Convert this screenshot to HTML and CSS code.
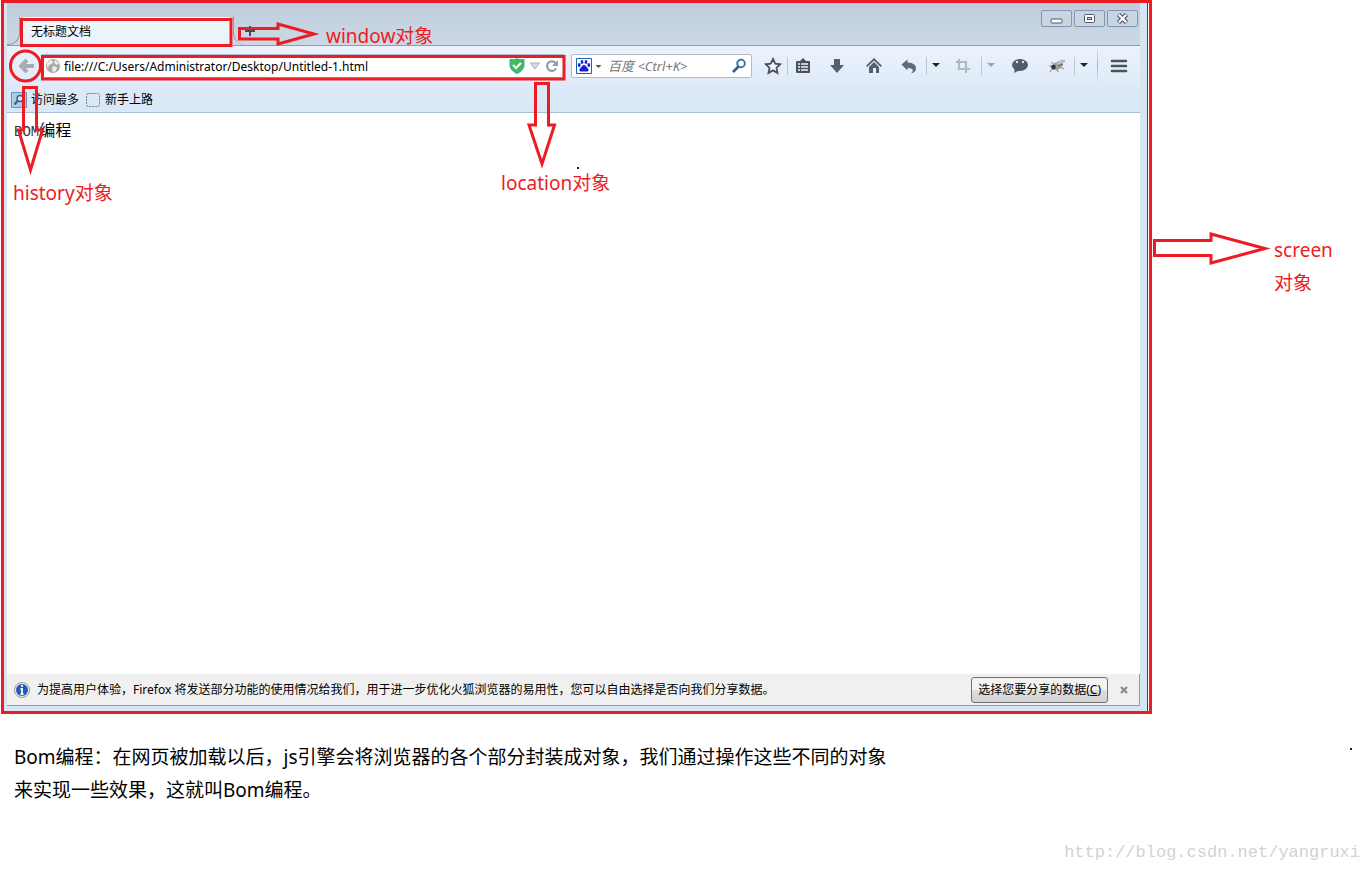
FILE: index.html
```html
<!DOCTYPE html>
<html lang="zh-CN">
<head>
<meta charset="utf-8">
<title>Bom编程</title>
<link rel="stylesheet" href="styles.css">
</head>
<body>
<main class="stage">
  <section class="window">
    <div class="window-inner">
      <header class="tabbar">
        <div class="tab-edge"></div>
        <div class="tab">无标题文档</div>
        <button class="new-tab" aria-label="新建标签页"><svg width="12" height="12" viewBox="0 0 12 12"><path d="M6 1v10M1 6h10" stroke="#3f4b5b" stroke-width="2"/></svg></button>
        <div class="window-buttons">
          <button aria-label="最小化"><svg width="13" height="11" viewBox="0 0 13 11"><rect x="1" y="6" width="11" height="4" rx="1" fill="#fff" stroke="#535666"/></svg></button>
          <button aria-label="还原"><svg width="13" height="11" viewBox="0 0 13 11"><rect x="1.500" y="1.500" width="10" height="8" rx="1" fill="#fff" stroke="#535666"/><rect x="4.500" y="4.500" width="4" height="2" fill="#c5d3e1" stroke="#535666"/></svg></button>
          <button aria-label="关闭"><svg width="13" height="11" viewBox="0 0 13 11"><path d="M2.500 1.500 10.500 9.500M10.500 1.500 2.500 9.500" stroke="#535666" stroke-width="4.500"/><path d="M2.800 1.800 10.200 9.200M10.200 1.800 2.800 9.200" stroke="#fff" stroke-width="2.300"/></svg></button>
        </div>
      </header>
      <nav class="toolbar">
        <button class="back" aria-label="后退"><svg width="16" height="16" viewBox="0 0 16 16"><path d="M8 2 2 8l6 6M3 8h12" fill="none" stroke="#a6adb8" stroke-width="4"/></svg></button>
        <div class="address">
          <svg width="16" height="16" viewBox="0 0 16 16"><circle cx="8" cy="8" r="7" fill="#a9a9a9"/><path d="M2 5 5 2l3 1-1 3-3 1-1 3-1-2zM10 2l4 3-2 2-3-2zM8 8l4 1-1 4-3 1-1-3z" fill="#eee"/></svg>
          <input type="text" aria-label="网址" value="file:///C:/Users/Administrator/Desktop/Untitled-1.html">
          <svg width="16" height="16" viewBox="0 0 16 16"><path d="M1 1.500Q5 2 8 .8 11 2 15 1.500V8q-1 5-7 7.500Q2 13 1 8z" fill="#43b95e" stroke="#2bacc0"/><path d="m4 7 3 3 5-5" stroke="#fff" stroke-width="2" fill="none"/></svg>
          <svg width="12" height="16" viewBox="0 0 12 16"><path d="M1.500 5h9L6 11z" fill="#d6dae0" stroke="#a9b0ba"/></svg>
          <button class="reload" aria-label="重新载入"><svg width="14" height="14" viewBox="0 0 14 14"><path d="M11 9.500A4.800 4.800 0 1 1 10.500 4" fill="none" stroke="#929ba7" stroke-width="2.200"/><path d="M13 1v6H7z" fill="#929ba7"/></svg></button>
        </div>
        <div class="search">
          <svg width="16" height="16" viewBox="0 0 16 16"><path d="M.5.500h15v15H.5z" fill="#fff" stroke="#1268a8"/><g fill="#1b20d8"><ellipse cx="3.200" cy="7" rx="1.400" ry="2"/><ellipse cx="6" cy="4" rx="1.400" ry="2"/><ellipse cx="10" cy="4" rx="1.400" ry="2"/><ellipse cx="12.800" cy="7" rx="1.400" ry="2"/><path d="M8 7C6 7 6 9 4.500 10S3 13.500 5 13.500h6c2 0 2-2.500.5-3.500S10 7 8 7z"/></g></svg>
          <svg width="7" height="16" viewBox="0 0 7 16"><path d="M.5 7h6L3.500 10z" fill="#555"/></svg>
          <input type="search" aria-label="百度搜索" placeholder="百度 &lt;Ctrl+K&gt;">
          <button class="go" aria-label="搜索"><svg width="16" height="16" viewBox="0 0 16 16"><circle cx="10" cy="5.500" r="3.800" fill="none" stroke="#2e6da4" stroke-width="1.800"/><path d="m7.500 8.500-5.500 5.500" stroke="#2a5f92" stroke-width="2.600"/></svg></button>
        </div>
        <div class="tools">
          <button class="tool-star" aria-label="收藏"><svg width="18" height="18" viewBox="0 0 18 18"><path d="m9 2 2.200 4.700 5 .6-3.700 3.500 1 5.100L9 13.400l-4.500 2.500 1-5.100L1.800 7.300l5-.6z" fill="#f4f7fb" stroke="#49525d" stroke-width="1.800"/></svg></button>
          <i class="sep"></i>
          <button class="tool-list" aria-label="书签"><svg width="16" height="16" viewBox="0 0 16 16"><path d="M2 3h3l3-3 3 3h3q1 0 1 1v10q0 1-1 1H2q-1 0-1-1V4q0-1 1-1z" fill="#49525d"/><path d="M3 6h2M6 6h7M3 9h2M6 9h7M3 12h2M6 12h7" stroke="#eef3fa" stroke-width="1.500"/></svg></button>
          <button class="tool" aria-label="下载"><svg width="16" height="16" viewBox="0 0 16 16"><path d="M5 1h6v6h4l-7 8-7-8h4z" fill="#56606c"/></svg></button>
          <button class="tool" aria-label="主页"><svg width="16" height="16" viewBox="0 0 16 16"><path d="m.7 8.300 7.300-7 7.300 7" fill="none" stroke="#56606c" stroke-width="1.800"/><path d="m8 4 5 5v6h-3v-5H7v5H3V9z" fill="#56606c"/></svg></button>
          <button class="tool tool-split" aria-label="撤销"><svg width="16" height="16" viewBox="0 0 16 16"><path d="m.5 6.500 6-5v3c6 0 9 3 8.500 6.500Q14.500 14 10 15.500q3-3 1-4.500-1-1-4.500-1v2.500z" fill="#606b77"/></svg></button>
          <i class="sep"></i>
          <button class="caret" aria-label="更多撤销选项"><svg width="8" height="5" viewBox="0 0 8 5"><path d="M0 0h8L4 4z" fill="#1f2429"/></svg></button>
          <button class="tool" aria-label="截图"><svg width="16" height="16" viewBox="0 0 16 16"><path d="M4 1v10h11M1 4h10v11" fill="none" stroke="#b1b9c3" stroke-width="2.200"/></svg></button>
          <i class="sep"></i>
          <button class="caret" aria-label="截图选项"><svg width="8" height="5" viewBox="0 0 8 5"><path d="M0 0h8L4 4z" fill="#9ba4af"/></svg></button>
          <button class="tool tool-chat" aria-label="聊天"><svg width="18" height="16" viewBox="0 0 18 16"><ellipse cx="9" cy="7" rx="8" ry="6" fill="#515c69"/><path d="m4 10-1 5 6-3z" fill="#515c69"/><circle cx="6" cy="4" r="1.200" fill="#dfe7f0"/><circle cx="12" cy="4" r="1.200" fill="#dfe7f0"/></svg></button>
          <button class="tool tool-split" aria-label="调试"><svg width="18" height="16" viewBox="0 0 18 16"><path d="M1 8h4M5 10l-3 4M9 11l1 3M12 9l4 2M3 4l4 3" stroke="#888" fill="none"/><ellipse cx="9" cy="8" rx="6" ry="3.800" transform="rotate(-25 9 8)" fill="#a2a29f"/><circle cx="5.500" cy="9" r="2.300" fill="#333"/><path d="m7 6 7-4 3 1-6 4z" fill="#c5c5c1" stroke="#888" stroke-width=".5"/><path d="m10 8 5-2" stroke="#555"/></svg></button>
          <i class="sep"></i>
          <button class="caret" aria-label="调试选项"><svg width="8" height="5" viewBox="0 0 8 5"><path d="M0 0h8L4 4z" fill="#1f2429"/></svg></button>
          <i class="sep sep-tall"></i>
          <button class="menu" aria-label="菜单"><svg width="18" height="14" viewBox="0 0 18 14"><path d="M2 2h14M2 7h14M2 12h14" stroke="#49525d" stroke-width="2.600" stroke-linecap="round"/></svg></button>
        </div>
      </nav>
      <div class="bookmarks">
        <a href="#"><svg width="16" height="16" viewBox="0 0 16 16"><path d="M.5.500h15v15H.5z" fill="#a9cde8" stroke="#6795b8"/><circle cx="9" cy="6.500" r="3" fill="#d9ebf8" stroke="#346388" stroke-width="1.500"/><path d="m6.500 9-3 3.500" stroke="#346388" stroke-width="2"/></svg>访问最多</a>
        <a href="#"><svg width="16" height="16" viewBox="0 0 16 16"><rect x="1.500" y="1.500" width="13" height="13" rx="2" fill="none" stroke="#777e87" stroke-dasharray="2 1"/></svg>新手上路</a>
      </div>
      <article class="viewport"><span class="mono">BOM</span>编程</article>
      <footer class="notice">
        <svg width="16" height="16" viewBox="0 0 16 16"><circle cx="8" cy="8" r="7.500" fill="#eee" stroke="#999"/><circle cx="8" cy="8" r="6" fill="#2459b5"/><path d="M8 3v2M6.500 7H8v5M6.500 12h3" stroke="#fff" stroke-width="1.800" fill="none"/></svg>
        <p>为提高用户体验，Firefox 将发送部分功能的使用情况给我们，用于进一步优化火狐浏览器的易用性，您可以自由选择是否向我们分享数据。</p>
        <button class="choose">选择您要分享的数据(<u>C</u>)</button>
        <button class="dismiss" aria-label="关闭通知"><svg width="8" height="8" viewBox="0 0 8 8"><path d="m1 1 6 6M7 1 1 7" stroke="#838b94" stroke-width="2.200"/></svg></button>
      </footer>
    </div>
  </section>
  <aside class="screen-label">screen<br>对象</aside>
</main>
<section class="caption">
  <p>Bom编程：在网页被加载以后，js引擎会将浏览器的各个部分封装成对象，我们通过操作这些不同的对象来实现一些效果，这就叫Bom编程。</p>
</section>
<p class="watermark">http://blog.csdn.net/yangruxi</p>
<svg class="marks" width="1368" height="760" viewBox="0 0 1368 760">
  <g fill="none" stroke="#ed1c24" stroke-width="3">
    <path d="M21.500 19.500h209.500v26H21.500zM42.500 56.500h521.500v22.500H42.500z"/>
    <circle cx="25.500" cy="66" r="15"/>
    <path d="M239.500 28.500H278V24l36 10-36 10v-5h-38.500z"/>
    <path d="M23.500 87.500h13V130h6l-12 40-12-40h5z"/>
    <path d="M535.500 83.500h13V125h6L542 164l-13-39h6.500z"/>
    <path d="M1154.500 240.500h56.500V234l54 14.500-54 14.500v-7.500h-56.500z"/>
  </g>
  <path d="M577 167h2v2h-2zM1350 748h2v2h-2z" fill="#222"/>
</svg>
<span class="label label-window">window对象</span>
<span class="label label-history">history对象</span>
<span class="label label-location">location对象</span>
</body>
</html>
```
FILE: styles.css
```css
* { box-sizing: border-box; }
body {
  margin: 0;
  min-height: 100vh;
  display: flex;
  flex-direction: column;
  position: relative;
  background: #fff;
  color: #000;
  font: 12px/16px "Noto Sans", "Noto Sans CJK SC", sans-serif;
}
p { margin: 0; }
svg { display: block; flex: none; }
button {
  display: flex;
  align-items: center;
  justify-content: center;
  padding: 0;
  border: 0;
  background: none;
  font: inherit;
  color: inherit;
}
input {
  flex: 1;
  min-width: 0;
  padding: 2px 0 0;
  border: 0;
  outline: 0;
  background: none;
  font: inherit;
  color: inherit;
}
.stage { flex: 1; display: flex; }
.window {
  flex: 1;
  display: flex;
  margin-left: 1px;
  padding: 0 1px 0 0;
  border: 3px solid #ed1c24;
  background: #fff;
}
.window-inner {
  flex: 1;
  display: flex;
  flex-direction: column;
  min-width: 0;
  padding: 0 7px 5px 3px;
  border-right: 1px solid #3d4454;
  background: #d7e4f1;
}
.tabbar {
  height: 43px;
  display: flex;
  align-items: flex-end;
  border-bottom: 1px solid #929cae;
  background: linear-gradient(#bfcddb, #ccd9e5);
}
.tab-edge {
  width: 13px;
  height: 28px;
  border: solid #929cae;
  border-width: 0 1px 1px 0;
  border-radius: 0 0 12px 0;
}
.tab {
  width: 213px;
  height: 29px;
  margin-bottom: -1px;
  padding: 7px 11px;
  border-radius: 6px 6px 0 0;
  background: linear-gradient(#f3f7fc, #e9f1fb);
}
.new-tab {
  width: 32px;
  height: 29px;
  border-left: 1px solid #929cae;
  border-radius: 0 0 0 12px;
}
.window-buttons {
  margin: 0 2px 18px auto;
  display: flex;
  gap: 2px;
}
.window-buttons button {
  width: 31px;
  height: 17px;
  border: 1px solid #8595b3;
  border-radius: 2px;
  background: #c8d5e2;
}
.toolbar {
  height: 39px;
  display: flex;
  align-items: center;
  background: linear-gradient(#ebf2fc, #dfebf8);
}
.back { width: 34px; padding-left: 5px; }
.address, .search {
  height: 24px;
  display: flex;
  align-items: center;
  border: 1px solid #b0bccb;
  border-radius: 2px;
  background: #fff;
}
.address {
  flex: 1;
  gap: 3px;
  padding: 0 5px 0 3px;
}
.address input { height: 20px; }
.address svg + svg { margin: 0 1px; }
.search {
  width: 181px;
  margin-left: 6px;
  padding: 0 4px;
  gap: 3px;
  font-size: 13px;
}
.search input::placeholder { color: #777; font-style: italic; opacity: 1; }
.search input { padding: 0 0 0 3px; }
.tools { display: flex; align-items: center; padding-left: 6px; }
.tool-star { width: 29px; }
.tool-list { width: 30px; }
.tool { width: 36px; height: 24px; }
.tool:nth-of-type(3) { width: 38px; }
.tool-split { width: 34px; }
.tool-chat { width: 40px; }
.caret { width: 18px; height: 24px; }
.sep { width: 1px; height: 18px; background: #b9c6d5; }
.sep-tall {
  height: 36px;
  margin-left: 4px;
  background: linear-gradient(#dfe8f2, #a8b4c2, #dfe8f2);
}
.menu { width: 42px; height: 24px; }
.bookmarks {
  height: 28px;
  display: flex;
  align-items: center;
  gap: 6px;
  padding: 2px 4px 0;
  border-bottom: 1px solid #a9bed3;
  background: linear-gradient(#dceaf8, #d9e8f7);
}
.bookmarks a {
  display: flex;
  align-items: center;
  gap: 4px;
  color: #000;
  text-decoration: none;
}
.viewport {
  flex: 1;
  padding: 6px 7px;
  background: #fff;
  font: 16px/24px "Liberation Serif", "Noto Sans CJK SC", serif;
}
.mono { font: 14px/24px "Liberation Mono", monospace; color: #333; }
.notice {
  height: 32px;
  display: flex;
  align-items: center;
  padding: 0 11px 0 7px;
  border: solid #9b9b9b;
  border-width: 0 1px 1px 0;
  background: #f0f0f0;
}
.notice p { flex: 1; padding-left: 7px; }
.choose {
  height: 26px;
  padding: 0 6px;
  border: 1px solid #707070;
  border-radius: 3px;
  background: linear-gradient(#f3f3f3 50%, #dedede 50%, #d2d2d2);
}
.dismiss { width: 8px; height: 16px; margin-left: 12px; }
.screen-label {
  width: 216px;
  padding: 234px 0 0 122px;
  color: #ed1c24;
  font-size: 19px;
  line-height: 33px;
}
.caption {
  max-width: 904px;
  padding: 27px 14px 0;
  font-size: 19px;
  line-height: 33px;
}
.watermark {
  padding: 34px 8px 6px 0;
  text-align: right;
  color: #d3d3cf;
  font: 17px/24px "Liberation Mono", monospace;
}
.marks { position: absolute; top: 0; left: 0; pointer-events: none; }
.label {
  position: absolute;
  color: #ed1c24;
  font-size: 19px;
  line-height: 28px;
}
.label-window { top: 22px; left: 326px; }
.label-history { top: 179px; left: 13px; }
.label-location { top: 169px; left: 501px; }
```
